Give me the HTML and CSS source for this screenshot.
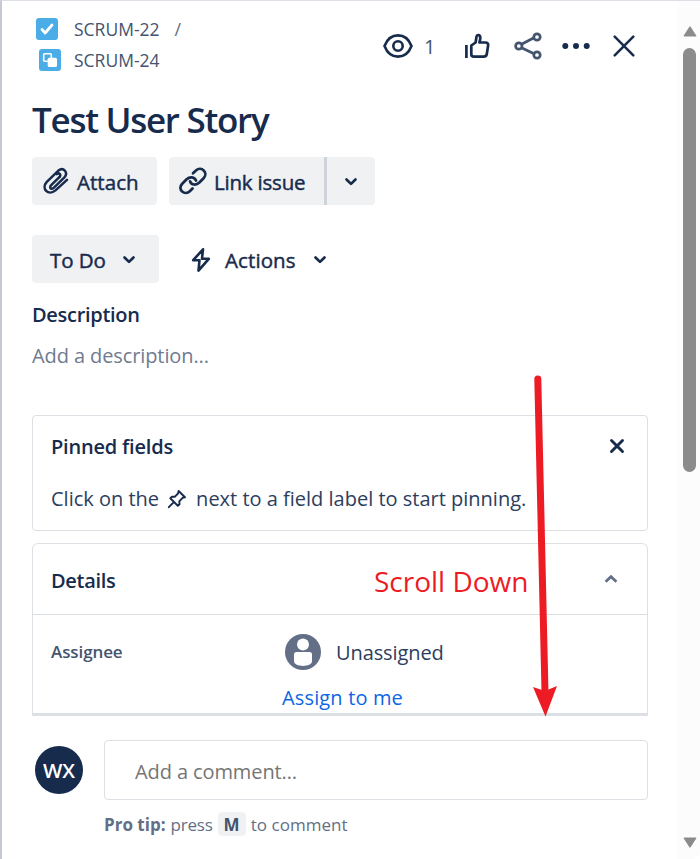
FILE: index.html
```html
<!DOCTYPE html>
<html lang="en">
<head>
<meta charset="utf-8">
<title>Test User Story</title>
<link rel="stylesheet" href="styles.css">
</head>
<body>
<div class="window">
  <main class="panel">
    <header class="header">
      <nav class="crumbs">
        <div class="crumb">
          <svg class="type-icon" width="22" height="22" viewBox="0 0 22 22"><rect width="22" height="22" rx="3" fill="#4bade8"/><path d="M6 11.5l3.2 3.5L16 7" fill="none" stroke="#fff" stroke-width="2.8" stroke-linecap="round" stroke-linejoin="round"/></svg>
          <span class="key">SCRUM-22</span><span class="slash">/</span>
        </div>
        <div class="crumb crumb-child">
          <svg class="type-icon" width="22" height="22" viewBox="0 0 22 22"><rect width="22" height="22" rx="3" fill="#4bade8"/><rect x="4.7" y="4.7" width="7.6" height="7.6" rx="1" fill="none" stroke="#fff" stroke-width="1.6"/><rect x="8.7" y="8.7" width="9.3" height="9.3" rx="1.6" fill="#fff"/></svg>
          <span class="key">SCRUM-24</span>
        </div>
      </nav>
      <div class="tools">
        <span class="tool watch">
          <svg width="30" height="26" viewBox="0 0 30 26" fill="none" stroke="#172b4d" stroke-width="2.6"><path d="M1.500 13C4.200 6 9 2.400 15 2.400S25.800 6 28.500 13C25.800 20 21 23.600 15 23.600S4.200 20 1.500 13Z"/><circle cx="15" cy="13" r="4.700"/></svg>
          <span class="count">1</span>
        </span>
        <span class="tool"><svg width="25" height="26" viewBox="0 0 25 26" fill="none" stroke="#172b4d" stroke-width="2.700" stroke-linejoin="round"><path d="M1.400 12v13"/><path d="M6.300 12.500L10.600 9.500L11.500 3.600C11.800 1.600 15 1.700 15.300 4.200C15.400 6 14.900 8 14.400 9.500H20.500C22.500 9.500 23.500 10.800 23.100 12.600L21.800 21C21.500 22.900 20.400 23.600 18.800 23.600H8.800C7.200 23.600 6.300 22.700 6.300 21.200Z"/></svg></span>
        <span class="tool"><svg width="28" height="28" viewBox="0 0 28 28" fill="none" stroke="#44546f" stroke-width="2.700"><path d="M8 12L19.500 6M8 16L19.500 21.500"/><circle cx="4.800" cy="14" r="3.200"/><circle cx="23" cy="5" r="3.200"/><circle cx="23" cy="23" r="3.200"/></svg></span>
        <span class="tool"><svg width="28" height="8" viewBox="0 0 28 8" fill="#172b4d"><circle cx="3.300" cy="4" r="3"/><circle cx="14" cy="4" r="3"/><circle cx="24.700" cy="4" r="3"/></svg></span>
        <span class="tool"><svg width="22" height="22" viewBox="0 0 22 22" fill="none" stroke="#172b4d" stroke-width="2.500" stroke-linecap="round"><path d="M1.700 1.700L20.300 20.300M20.300 1.700L1.700 20.300"/></svg></span>
      </div>
    </header>

    <h1 class="title">Test User Story</h1>

    <div class="buttons">
      <button class="btn attach">
        <svg width="28" height="28" viewBox="0 0 28 28" fill="none" stroke="#172b4d" stroke-width="2.500" stroke-linecap="round" stroke-linejoin="round"><path d="M17.600 9.800L9.200 18.200C6.700 20.600 9.400 23 11.700 20.800L22.400 10.300C26.500 6 21.700-.600 16.400 3.600L4.800 14.800C-1.200 21.500 6.200 29.500 13.500 23.400L25 12.800"/><path d="M17.600 9.800C19.700 7.700 16.900 5.200 14.800 7.200"/></svg>
        <span class="label">Attach</span>
      </button>
      <div class="split">
        <button class="btn link">
          <svg width="28" height="28" viewBox="0 0 28 28" fill="none" stroke="#172b4d" stroke-width="2.700" stroke-linecap="round"><path d="M14 6.300L17.200 3.300C22.200-1 29.600 5.600 24.800 11L20.400 15.500C17.300 18.500 12.400 18.300 11 14.300"/><path d="M13.500 21.500L10.800 24.300C5.800 29.200-2 22.500 3 17L7.600 12.300C10.700 9.400 15.500 9.500 17 13.500"/></svg>
          <span class="label">Link issue</span>
        </button>
        <button class="btn more"><svg width="14" height="10" viewBox="0 0 14 10"><path class="chev" d="M2.500 2.500L7 6.900L11.500 2.500"/></svg></button>
      </div>
    </div>

    <div class="buttons status-row">
      <button class="btn status"><span class="label">To Do</span><svg width="14" height="10" viewBox="0 0 14 10"><path class="chev" d="M2.500 2.500L7 6.900L11.500 2.500"/></svg></button>
      <button class="btn actions">
        <svg width="20" height="26" viewBox="0 0 20 26" fill="none" stroke="#172b4d" stroke-width="2.600" stroke-linejoin="round"><path d="M12 2.300L2.200 13.200H8.500L7.500 23.700L17.800 11.800H11Z"/></svg>
        <span class="label">Actions</span>
        <svg width="14" height="10" viewBox="0 0 14 10"><path class="chev" d="M2.500 2.500L7 6.900L11.500 2.500"/></svg>
      </button>
    </div>

    <h2 class="heading desc-heading">Description</h2>
    <p class="placeholder">Add a description...</p>

    <section class="card pinned">
      <div class="card-head">
        <h2 class="heading pinned-heading">Pinned fields</h2>
        <svg width="16" height="16" viewBox="0 0 16 16" fill="none" stroke="#172b4d" stroke-width="2.900" stroke-linecap="round"><path d="M2.500 2.500L13.500 13.500M13.500 2.500L2.500 13.500"/></svg>
      </div>
      <p class="hint"><span class="hint-a">Click on the</span><svg class="pin" width="20" height="20" viewBox="0 0 20 20" fill="none" stroke="#172b4d" stroke-width="1.900" stroke-linejoin="round" stroke-linecap="round"><path d="M11.600 2L18 8.300L15.600 8.800L12.300 12.400L12.500 15.200L10.800 16.700L3.300 9.300L5 7.700L7.700 7.800L11 4.500ZM6.600 13.300L1.800 18.200"/></svg><span class="hint-b">next to a field label to start pinning.</span></p>
    </section>

    <section class="card details">
      <div class="card-head details-head">
        <h2 class="heading details-heading">Details</h2>
        <svg width="14" height="10" viewBox="0 0 14 10"><path class="chev muted" d="M1.600 7.700L7 2.700L12.400 7.700"/></svg>
      </div>
      <div class="field">
        <span class="field-label">Assignee</span>
        <div class="field-value">
          <div class="person">
            <svg width="36" height="36" viewBox="0 0 36 36"><circle cx="18" cy="18" r="18" fill="#626f86"/><circle cx="18" cy="10.500" r="6" fill="#fff"/><path d="M9 20.500Q9 18 11.500 18H24.500Q27 18 27 20.500V27C27 33.500 9 33.500 9 27Z" fill="#fff"/></svg>
            <span class="person-name">Unassigned</span>
          </div>
          <a class="assign">Assign to me</a>
        </div>
      </div>
    </section>

    <footer class="composer">
      <div class="avatar"><span>WX</span></div>
      <div class="composer-main">
        <div class="comment-box"><span>Add a comment…</span></div>
        <p class="tip"><b class="tip-lead">Pro tip:</b><span class="tip-press">press</span><kbd class="kbd">M</kbd><span class="tip-end">to comment</span></p>
      </div>
    </footer>
  </main>
  <aside class="scrollbar">
    <svg width="14" height="11" viewBox="0 0 14 11"><path d="M7 1.200L12.600 9.800H1.400Z" fill="#8b8b8b" stroke="#8b8b8b" stroke-width="1.500" stroke-linejoin="round"/></svg>
    <div class="thumb"></div>
    <svg class="down" width="14" height="11" viewBox="0 0 14 11"><path d="M7 9.800L12.600 1.200H1.400Z" fill="#8b8b8b" stroke="#8b8b8b" stroke-width="1.500" stroke-linejoin="round"/></svg>
  </aside>
  <span class="note">Scroll Down</span>
  <svg class="arrow" width="40" height="350" viewBox="0 0 40 350"><path d="M14.800 12L22 325" stroke="#ed1c24" stroke-width="7" stroke-linecap="round"/><path d="M10 320L22 324L34 319L22.500 349.500Z" fill="#ed1c24"/></svg>
</div>
</body>
</html>
```
FILE: styles.css
```css
* { box-sizing: border-box; }
body {
  margin: 0;
  font-family: "Open Sans", "Noto Sans", sans-serif;
  color: #172b4d;
  background: #fff;
}
h1, h2, p { margin: 0; }
span, a, h1, h2, b { white-space: nowrap; }
svg { display: block; flex: none; }
.window {
  position: relative;
  display: flex;
  width: 700px;
  height: 859px;
  overflow: hidden;
  border-top: 1px solid #dcdfe5;
  border-left: 2px solid #c5c9d5;
}
.panel { width: 676px; padding: 0 30px; }

.header { display: flex; height: 91px; }
.crumbs { width: 351px; padding-top: 12px; }
.crumb { display: flex; align-items: center; height: 31px; padding-left: 4px; font-size: 18px; color: #44546f; }
.crumb-child { padding-left: 7px; }
.key { margin-left: 16px; font-size: 17.5px; letter-spacing: 0; }
.crumb-child .key { margin-left: 13px; }
.slash { margin-left: 15px; color: #626f86; }
.tools { display: grid; grid-template-columns: 82px 49px 48px 51px 22px; height: 90px; align-items: center; }
.tool { display: flex; align-items: center; }
.count { margin-left: 11px; padding-top: 1px; font-size: 20px; color: #44546f; }

.title { height: 56px; line-height: 56px; font-size: 35px; font-weight: 600; letter-spacing: -1.28px; }

.buttons { display: flex; gap: 12px; margin-top: 9px; height: 48px; }
.btn {
  display: flex;
  align-items: center;
  height: 48px;
  padding: 0;
  border: 0;
  border-radius: 4px;
  background: #f0f1f3;
  font: 500 20.5px "Open Sans", "Noto Sans", sans-serif;
  color: #172b4d;
}
.chev { fill: none; stroke: #172b4d; stroke-width: 2.7; stroke-linecap: round; stroke-linejoin: round; }
.chev.muted { stroke: #626f86; stroke-linecap: butt; stroke-linejoin: miter; }
.attach { width: 125px; padding-left: 10px; gap: 7px; }
.split { display: flex; }
.link { width: 155px; padding-left: 10px; gap: 7px; border-radius: 4px 0 0 4px; }
.more { width: 51px; border-left: 3px solid #d0d2dc; padding-left: 17px; border-radius: 0 4px 4px 0; }
.more svg, .status svg, .actions svg { position: relative; top: 1px; }
.label { padding-top: 2px; letter-spacing: -0.1px; -webkit-text-stroke: 0.45px #172b4d; }
.attach .label { letter-spacing: 0.05px; }
.link .label { letter-spacing: -0.2px; }
.status-row { margin-top: 30px; gap: 32px; }
.status { width: 127px; padding-left: 18px; gap: 16px; }
.actions { background: none; }
.actions .label { margin: 0 17px 0 14px; letter-spacing: 0.1px; }

.heading { font-size: 20px; font-weight: 600; letter-spacing: -0.3px; line-height: 28px; }
.desc-heading { margin-top: 18px; }
.placeholder { margin-top: 13px; font-size: 20px; line-height: 28px; letter-spacing: -0.1px; color: #6f7b90; }

.card { border: 1px solid #dcdfe4; border-radius: 4px; }
.card-head { display: flex; justify-content: space-between; align-items: center; padding-left: 18px; }
.pinned { height: 116px; margin-top: 45px; padding-top: 16px; }
.pinned .card-head { padding-right: 22px; height: 28px; }
.pinned-heading { padding-top: 2px; letter-spacing: -0.2px; }
.hint { display: flex; align-items: center; margin-top: 25px; padding-left: 18px; font-size: 20px; line-height: 28px; color: #2c3e5d; }
.pin { margin: 0 9px 0 8px; }
.details { height: 173px; margin-top: 12px; border-bottom: 3px solid #dcdfe4; border-radius: 6px 6px 0 0; }
.details-head { height: 71px; padding-right: 29px; border-bottom: 1px solid #dcdfe4; }
.details-heading { padding-top: 3px; }
.field { display: flex; padding-left: 18px; }
.field-label { width: 231px; padding-top: 23px; font-size: 17px; font-weight: 600; letter-spacing: -0.1px; line-height: 28px; color: #44546f; }
.person { display: flex; align-items: center; gap: 15px; height: 36px; margin: 19px 0 0 3px; font-size: 20px; letter-spacing: -0.1px; color: #2c3e5d; }
.assign { display: block; margin-top: 14px; font-size: 20px; line-height: 28px; letter-spacing: 0.15px; color: #0c66e4; }

.composer { display: flex; margin-top: 24px; }
.avatar {
  display: flex;
  align-items: center;
  justify-content: center;
  width: 48px;
  height: 48px;
  margin: 6px 21px 0 3px;
  border-radius: 50%;
  background: #172b4d;
  color: #fff;
  font-size: 20.5px;
  font-weight: 600;
}
.composer-main { width: 544px; }
.comment-box {
  display: flex;
  align-items: center;
  height: 60px;
  padding: 2px 0 0 30px;
  border: 1px solid #dcdfe4;
  border-radius: 4px;
  font-size: 20px;
  letter-spacing: -0.1px;
  color: #757575;
}
.tip { display: flex; align-items: center; height: 24px; margin-top: 12px; font-size: 17px; color: #626f86; }
.tip-press { margin-left: 5px; letter-spacing: -0.2px; }
.kbd { width: 28px; height: 24px; margin: 0 5px; border-radius: 4px; background: #f0f1f3; color: #44546f; font: 700 17px/25px "Open Sans", sans-serif; text-align: center; }
.tip-end { letter-spacing: 0.05px; }

.scrollbar { width: 22px; padding: 25px 0 0 5px; background: #fcfcfc; border-bottom-right-radius: 8px; }
.thumb { width: 13px; height: 424px; margin-top: 11px; border-radius: 7px; background: #8b8b8b; }
.down { margin-top: 365px; }

.note { position: absolute; left: 372px; top: 560px; font-size: 28px; line-height: 40px; color: #ed1c24; }
.arrow { position: absolute; left: 521px; top: 366px; }
```
